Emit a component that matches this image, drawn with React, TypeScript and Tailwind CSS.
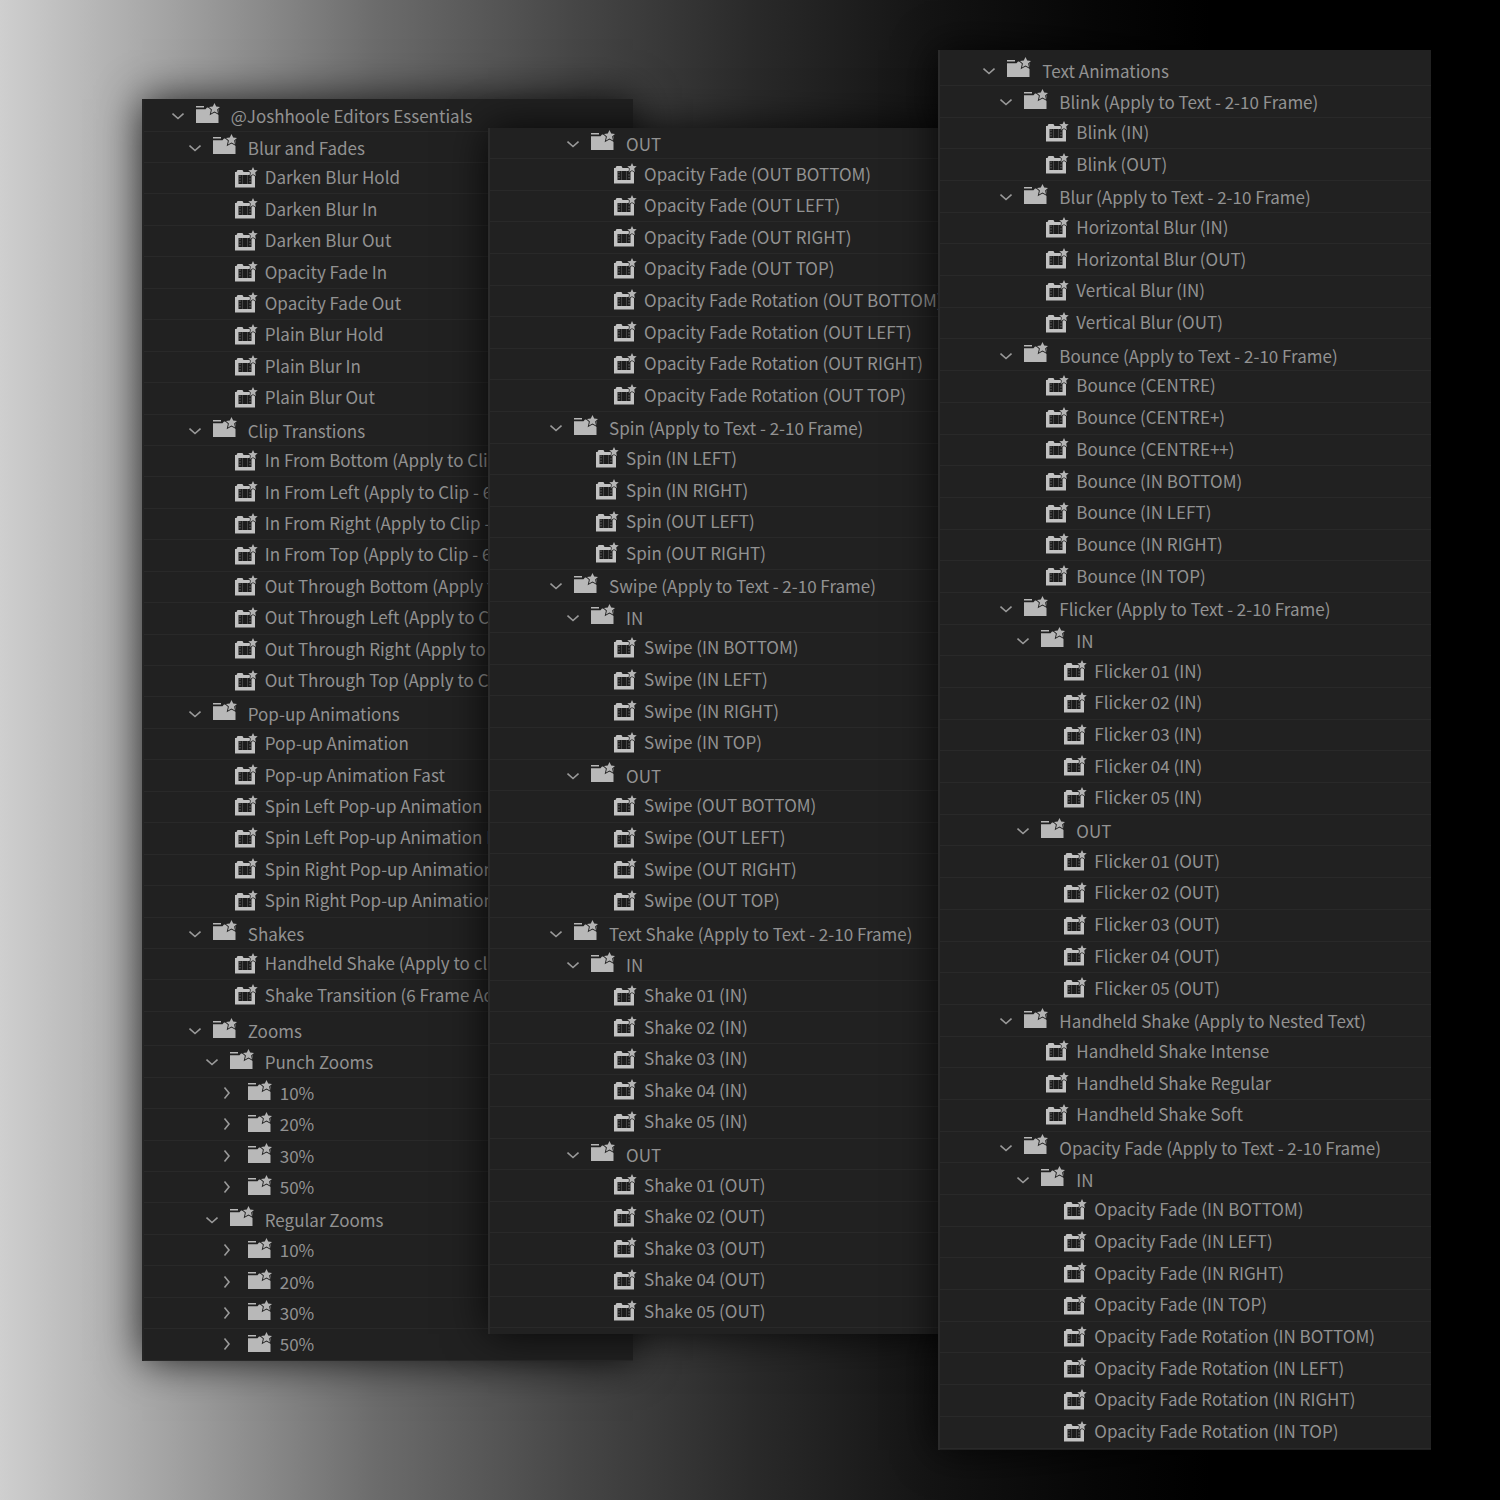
type Kind = "open" | "closed" | "preset";
type Row = [kind: Kind, depth: number, label: string, spaced?: boolean];

const essentials: Row[] = [
  ["open", 0, "@Joshhoole Editors Essentials"],
  ["open", 1, "Blur and Fades"],
  ["preset", 2, "Darken Blur Hold"],
  ["preset", 2, "Darken Blur In"],
  ["preset", 2, "Darken Blur Out"],
  ["preset", 2, "Opacity Fade In"],
  ["preset", 2, "Opacity Fade Out"],
  ["preset", 2, "Plain Blur Hold"],
  ["preset", 2, "Plain Blur In"],
  ["preset", 2, "Plain Blur Out"],
  ["open", 1, "Clip Transtions"],
  ["preset", 2, "In From Bottom (Apply to Clip"],
  ["preset", 2, "In From Left (Apply to Clip - 6"],
  ["preset", 2, "In From Right (Apply to Clip -"],
  ["preset", 2, "In From Top (Apply to Clip - 6"],
  ["preset", 2, "Out Through Bottom (Apply to"],
  ["preset", 2, "Out Through Left (Apply to Clip"],
  ["preset", 2, "Out Through Right (Apply to"],
  ["preset", 2, "Out Through Top (Apply to Clip"],
  ["open", 1, "Pop-up Animations"],
  ["preset", 2, "Pop-up Animation"],
  ["preset", 2, "Pop-up Animation Fast"],
  ["preset", 2, "Spin Left Pop-up Animation"],
  ["preset", 2, "Spin Left Pop-up Animation Fast"],
  ["preset", 2, "Spin Right Pop-up Animation"],
  ["preset", 2, "Spin Right Pop-up Animation"],
  ["open", 1, "Shakes"],
  ["preset", 2, "Handheld Shake (Apply to clip"],
  ["preset", 2, "Shake Transition (6 Frame Adj"],
  ["open", 1, "Zooms", true],
  ["open", 2, "Punch Zooms"],
  ["closed", 3, "10%"],
  ["closed", 3, "20%"],
  ["closed", 3, "30%"],
  ["closed", 3, "50%"],
  ["open", 2, "Regular Zooms"],
  ["closed", 3, "10%"],
  ["closed", 3, "20%"],
  ["closed", 3, "30%"],
  ["closed", 3, "50%"],
];

const textOut: Row[] = [
  ["open", 2, "OUT"],
  ["preset", 3, "Opacity Fade (OUT BOTTOM)"],
  ["preset", 3, "Opacity Fade (OUT LEFT)"],
  ["preset", 3, "Opacity Fade (OUT RIGHT)"],
  ["preset", 3, "Opacity Fade (OUT TOP)"],
  ["preset", 3, "Opacity Fade Rotation (OUT BOTTOM)"],
  ["preset", 3, "Opacity Fade Rotation (OUT LEFT)"],
  ["preset", 3, "Opacity Fade Rotation (OUT RIGHT)"],
  ["preset", 3, "Opacity Fade Rotation (OUT TOP)"],
  ["open", 1, "Spin (Apply to Text - 2-10 Frame)"],
  ["preset", 2, "Spin (IN LEFT)"],
  ["preset", 2, "Spin (IN RIGHT)"],
  ["preset", 2, "Spin (OUT LEFT)"],
  ["preset", 2, "Spin (OUT RIGHT)"],
  ["open", 1, "Swipe (Apply to Text - 2-10 Frame)"],
  ["open", 2, "IN"],
  ["preset", 3, "Swipe (IN BOTTOM)"],
  ["preset", 3, "Swipe (IN LEFT)"],
  ["preset", 3, "Swipe (IN RIGHT)"],
  ["preset", 3, "Swipe (IN TOP)"],
  ["open", 2, "OUT"],
  ["preset", 3, "Swipe (OUT BOTTOM)"],
  ["preset", 3, "Swipe (OUT LEFT)"],
  ["preset", 3, "Swipe (OUT RIGHT)"],
  ["preset", 3, "Swipe (OUT TOP)"],
  ["open", 1, "Text Shake (Apply to Text - 2-10 Frame)"],
  ["open", 2, "IN"],
  ["preset", 3, "Shake 01 (IN)"],
  ["preset", 3, "Shake 02 (IN)"],
  ["preset", 3, "Shake 03 (IN)"],
  ["preset", 3, "Shake 04 (IN)"],
  ["preset", 3, "Shake 05 (IN)"],
  ["open", 2, "OUT"],
  ["preset", 3, "Shake 01 (OUT)"],
  ["preset", 3, "Shake 02 (OUT)"],
  ["preset", 3, "Shake 03 (OUT)"],
  ["preset", 3, "Shake 04 (OUT)"],
  ["preset", 3, "Shake 05 (OUT)"],
];

const textAnimations: Row[] = [
  ["open", 0, "Text Animations"],
  ["open", 1, "Blink (Apply to Text - 2-10 Frame)"],
  ["preset", 2, "Blink (IN)"],
  ["preset", 2, "Blink (OUT)"],
  ["open", 1, "Blur (Apply to Text - 2-10 Frame)"],
  ["preset", 2, "Horizontal Blur (IN)"],
  ["preset", 2, "Horizontal Blur (OUT)"],
  ["preset", 2, "Vertical Blur (IN)"],
  ["preset", 2, "Vertical Blur (OUT)"],
  ["open", 1, "Bounce (Apply to Text - 2-10 Frame)"],
  ["preset", 2, "Bounce (CENTRE)"],
  ["preset", 2, "Bounce (CENTRE+)"],
  ["preset", 2, "Bounce (CENTRE++)"],
  ["preset", 2, "Bounce (IN BOTTOM)"],
  ["preset", 2, "Bounce (IN LEFT)"],
  ["preset", 2, "Bounce (IN RIGHT)"],
  ["preset", 2, "Bounce (IN TOP)"],
  ["open", 1, "Flicker (Apply to Text - 2-10 Frame)"],
  ["open", 2, "IN"],
  ["preset", 3, "Flicker 01 (IN)"],
  ["preset", 3, "Flicker 02 (IN)"],
  ["preset", 3, "Flicker 03 (IN)"],
  ["preset", 3, "Flicker 04 (IN)"],
  ["preset", 3, "Flicker 05 (IN)"],
  ["open", 2, "OUT"],
  ["preset", 3, "Flicker 01 (OUT)"],
  ["preset", 3, "Flicker 02 (OUT)"],
  ["preset", 3, "Flicker 03 (OUT)"],
  ["preset", 3, "Flicker 04 (OUT)"],
  ["preset", 3, "Flicker 05 (OUT)"],
  ["open", 1, "Handheld Shake (Apply to Nested Text)"],
  ["preset", 2, "Handheld Shake Intense"],
  ["preset", 2, "Handheld Shake Regular"],
  ["preset", 2, "Handheld Shake Soft"],
  ["open", 1, "Opacity Fade (Apply to Text - 2-10 Frame)"],
  ["open", 2, "IN"],
  ["preset", 3, "Opacity Fade (IN BOTTOM)"],
  ["preset", 3, "Opacity Fade (IN LEFT)"],
  ["preset", 3, "Opacity Fade (IN RIGHT)"],
  ["preset", 3, "Opacity Fade (IN TOP)"],
  ["preset", 3, "Opacity Fade Rotation (IN BOTTOM)"],
  ["preset", 3, "Opacity Fade Rotation (IN LEFT)"],
  ["preset", 3, "Opacity Fade Rotation (IN RIGHT)"],
  ["preset", 3, "Opacity Fade Rotation (IN TOP)"],
];

function FolderIcon() {
  return (
    <svg width="24" height="21" viewBox="0 0 24 21" className="shrink-0">
      <path fill="#b8b8b8" d="M0 3h8v1.400H0zM0 6.200h9.500L11 4.500h11.500V20H0z" />
      <path
        fill="#b4b4b4"
        stroke="#212121"
        strokeWidth="1.800"
        paintOrder="stroke"
        d="M18.500 0l1.700 3.500 3.800.4-2.900 2.600.9 4-3.500-2.100-3.500 2.100.9-4-2.900-2.600 3.800-.4z"
      />
    </svg>
  );
}

function PresetIcon() {
  return (
    <svg width="23" height="21" viewBox="0 0 23 21" className="shrink-0">
      <path fill="#c2c2c2" d="M0 5h1.500L2.500 3h5l1 2H20v15.500H0z" />
      <path fill="#1c1c1c" d="M3.500 8h13v9h-13z" />
      <path stroke="#777" strokeDasharray="1.300 1.500" d="M5 8.500v8M15 8.500v8" />
      <path stroke="#444" d="M7.500 8v9M12.500 8v9" />
      <path
        fill="#b4b4b4"
        stroke="#212121"
        strokeWidth="1.400"
        paintOrder="stroke"
        d="M18 0l1.400 3 3.300.3-2.500 2.300.7 3.400-2.900-1.800-2.900 1.800.7-3.400-2.500-2.300 3.300-.3z"
      />
    </svg>
  );
}

function Chevron({ open }: { open: boolean }) {
  return (
    <svg width="12" height="12" viewBox="0 0 12 12" fill="none" stroke="#9a9a9a" strokeWidth="1.600" className="shrink-0">
      <path d={open ? "M.5 3.500 6 8.500l5.500-5" : "M3.500.5 8 6l-4.500 5.500"} />
    </svg>
  );
}

const openIndent = [
  "pl-[calc(var(--base)+28px)]",
  "pl-[calc(var(--base)+45px)]",
  "pl-[calc(var(--base)+62px)]",
];

function TreeRow({ row: [kind, depth, label, spaced] }: { row: Row }) {
  const base = "flex min-h-6 flex-1 items-center border-b border-[#292929] whitespace-nowrap";

  if (kind === "preset") {
    return (
      <li
        className={`${base} gap-[7px] pb-[2px] ${
          depth === 2 ? "pl-[calc(var(--base)+91px)]" : "pl-[calc(var(--base)+109px)]"
        }`}
      >
        <PresetIcon />
        {label}
      </li>
    );
  }

  if (kind === "closed") {
    return (
      <li className={`${base} py-px pl-[calc(var(--base)+77px)]`}>
        <button type="button" aria-expanded={false} className="flex items-center gap-2">
          <span className="flex items-center gap-[15px]">
            <Chevron open={false} />
            <span className="pb-1">
              <FolderIcon />
            </span>
          </span>
          {label}
        </button>
      </li>
    );
  }

  return (
    <li className={`${base} pt-[2px] ${openIndent[depth]} ${spaced ? "mt-[3px]" : ""}`}>
      <button type="button" aria-expanded={true} className="flex items-center gap-[11px]">
        <span className="flex items-center gap-3">
          <Chevron open />
          <span className="pb-[6px]">
            <FolderIcon />
          </span>
        </span>
        {label}
      </button>
    </li>
  );
}

function Panel({ rows, className }: { rows: Row[]; className: string }) {
  return (
    <ul
      className={`flex shrink-0 flex-col overflow-hidden border-l-2 bg-[#212121] shadow-[0_0_40px_rgba(0,0,0,0.800)] ${className}`}
    >
      {rows.map((row, i) => (
        <TreeRow key={i} row={row} />
      ))}
    </ul>
  );
}

export default function App() {
  return (
    <main className="flex min-h-screen w-full items-start overflow-hidden bg-[linear-gradient(90deg,#cfcfcf_0%,#a0a0a0_12%,#6c6c6c_25%,#474747_38%,#2a2a2a_50%,#141414_62%,#070707_73%,#000_82%)] pl-[9.450%] font-['Noto_Sans_CJK_SC',sans-serif] text-[17px] leading-6 text-[#929292]">
      <Panel
        rows={essentials}
        className="mt-[7.300%] aspect-[491/1260] w-[36.200%] border-[#242424] pt-px [--base:0px]"
      />
      <Panel
        rows={textOut}
        className="mt-[9.400%] -ml-[10.700%] aspect-[500/1207] w-[36.800%] border-[#2b2b2b] pb-[6px] [--base:15px]"
      />
      <Panel
        rows={textAnimations}
        className="mt-[3.700%] -ml-[3.650%] aspect-[493/1400] w-[36.300%] border-[#2b2b2b] pt-[4px] pb-[2px] [--base:15px]"
      />
    </main>
  );
}
